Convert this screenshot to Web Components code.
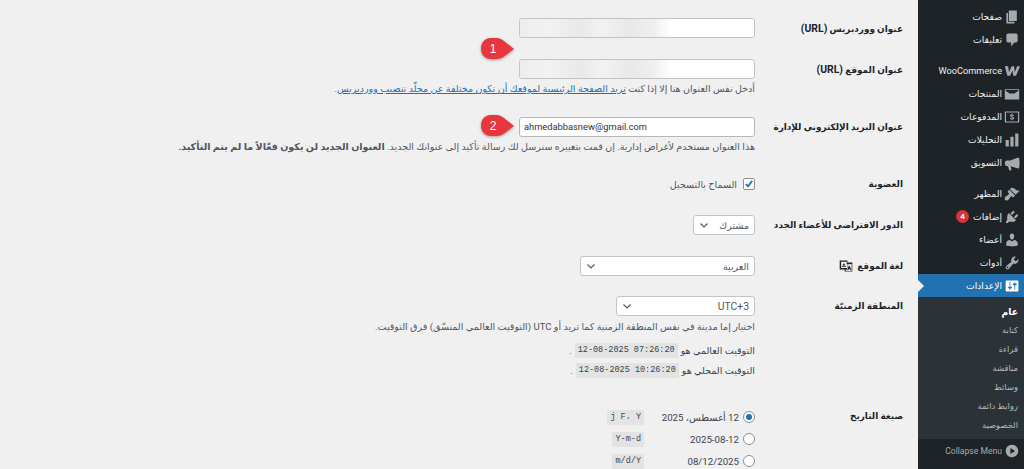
<!DOCTYPE html>
<html lang="ar" dir="rtl">
<head>
<meta charset="utf-8">
<title>إعدادات عامة</title>
<style>
  html, body { margin: 0; height: 100%; overflow: hidden; background: #f0f0f1; }
  body { font-family: Roboto, "DejaVu Sans", sans-serif; }
</style>
</head>
<body>
<wp-admin>
  <wp-menu slot="menu"></wp-menu>

  <wp-row label="عنوان ووردبريس (URL)" style="--after:21px"><wp-field blurred></wp-field></wp-row>
  <wp-row label="عنوان الموقع (URL)" style="--after:21px">
    <wp-field blurred></wp-field>
    <wp-desc>أدخل نفس العنوان هنا إلا إذا كنت <a href="#" style="color:#2271b1">تريد الصفحة الرئيسية لموقعك أن تكون مختلفة عن مجلّد تنصيب ووردبريس</a>.</wp-desc>
  </wp-row>
  <wp-row label="عنوان البريد الإلكتروني للإدارة" style="--after:20px">
    <wp-field value="ahmedabbasnew@gmail.com"></wp-field>
    <wp-desc>هذا العنوان مستخدم لأغراض إدارية. إن قمت بتغييره سنرسل لك رسالة تأكيد إلى عنوانك الجديد. <strong>العنوان الجديد لن يكون فعّالاً ما لم يتم التأكيد.</strong></wp-desc>
  </wp-row>
  <wp-row label="العضوية" style="--after:21px"><wp-check>السماح بالتسجيل</wp-check></wp-row>
  <wp-row label="الدور الافتراضي للأعضاء الجدد" style="--after:21px"><wp-select width="62">مشترك</wp-select></wp-row>
  <wp-row label="لغة الموقع" icon="translation" style="--after:20px"><wp-select width="175">العربية</wp-select></wp-row>
  <wp-row label="المنطقة الزمنيّة" style="--after:28px">
    <wp-select width="139"><span dir="ltr">UTC+3</span></wp-select>
    <wp-desc style="margin-top:4px">اختيار إما مدينة في نفس المنطقة الزمنية كما تريد أو UTC (التوقيت العالمي المنسّق) فرق التوقيت.</wp-desc>
    <wp-time label="التوقيت العالمي هو" value="12-08-2025 07:26:20" style="margin-top:9px"></wp-time>
    <wp-time label="التوقيت المحلي هو" value="12-08-2025 10:26:20"></wp-time>
  </wp-row>
  <wp-row label="صيغة التاريخ">
    <wp-radio checked code="j F، Y">12 أغسطس، 2025</wp-radio>
    <wp-radio code="Y-m-d">2025-08-12</wp-radio>
    <wp-radio code="m/d/Y">08/12/2025</wp-radio>
  </wp-row>

  <wp-callout slot="over" n="1" style="top:37px"></wp-callout>
  <wp-callout slot="over" n="2" style="top:114px"></wp-callout>
</wp-admin>

<script>
const FONT = 'Roboto, "DejaVu Sans", sans-serif';
const ICONS = {
  page: '<path d="M6 15V2h10v13H6zm-1 1h8v2H3V5h2v11z"/>',
  comments: '<path d="M5 2h10c1.1 0 2 .9 2 2v7c0 1.1-.9 2-2 2h-2l-4 5v-5H5c-1.1 0-2-.9-2-2V4c0-1.1.9-2 2-2z"/>',
  woo: '<path d="M1 4h4.200l1 7.500L9.600 4h3l.9 7.500L16.400 4H20l-5 12h-3.400l-1-6.500L7.600 16H4.200z"/>',
  products: '<path fill-rule="evenodd" d="M1 4h18v13H1zM2 6l5 3.500h6L18 6V5H2z"/>',
  payments: '<path fill-rule="evenodd" d="M1 3h18v14H1zm1.500 1.500v11h15v-11z"/><path d="M9.400 6h1.200v1c.8.1 1.500.4 1.900.8l-.7 1c-.5-.4-1.100-.7-1.700-.7-.6 0-.9.2-.9.5s.4.5 1.200.7c1.300.3 2.200.8 2.200 1.900 0 1-.7 1.700-2 1.800v1H9.400v-1c-.9-.1-1.700-.5-2.200-1l.8-1c.5.5 1.200.8 1.900.8.600 0 1-.2 1-.6s-.4-.6-1.300-.8C8.500 10.100 7.700 9.600 7.700 8.500c0-1 .7-1.500 1.700-1.600z"/>',
  analytics: '<path d="M2 10h4v8H2zM8 6h4v12H8zM14 2h4v16h-4z"/>',
  marketing: '<path d="M18 3 8 7H4a3 3 0 0 0-3 3v1a3 3 0 0 0 3 3h1l1.500 5h3L8.200 14.200 18 17c1 0 1.500-3 1.500-7S19 3 18 3z"/>',
  appearance: '<path d="M14.480 11.060 7.410 3.990l1.500-1.500c.5-.56 2.300-.47 3.510.32 1.210.8 1.430 1.280 2.910 2.100 1.180.64 2.450 1.260 4.450.85zm-.71.71L6.700 4.700 4.930 6.470c-.39.39-.39 1.020 0 1.410l1.060 1.060c.39.39.39 1.030 0 1.420-.6.6-1.430 1.110-2.210 1.690-.35.26-.7.53-1.010.84C1.430 13.230.4 15.600 1.310 17.610c1.170 1.210 3.430.3 4.910-1.100.44-.44.77-.9 1.070-1.390.43-.7.84-1.420 1.300-2.060.29-.39.95-.36 1.340.03l.77.77c.39.39 1.020.39 1.410 0z"/>',
  plugins: '<path d="M13.110 4.360 9.870 7.600 8 5.730l3.240-3.240c.35-.34 1.050-.2 1.560.32.52.51.66 1.210.31 1.550zm-8 1.770.91-1.120 9.010 9.010-1.190.84c-.71.71-2.630 1.160-3.820 1.160H6.140L4.900 17.260c-.59.59-1.540.59-2.120 0-.59-.58-.59-1.530 0-2.120l1.240-1.240v-3.880c0-1.130.4-3.190 1.090-3.890zm7.260 3.970 3.240-3.240c.34-.35 1.040-.21 1.550.31.52.51.66 1.210.31 1.550l-3.240 3.250z"/>',
  users: '<path d="M10 9.250c-2.270 0-2.730-3.440-2.730-3.440C7 4.020 7.820 2 9.970 2c2.160 0 2.980 2.020 2.710 3.810 0 0-.41 3.440-2.680 3.440zm0 2.570L12.720 10c2.390 0 4.520 2.330 4.520 4.530v2.490s-3.650 1.130-7.240 1.130c-3.650 0-7.240-1.130-7.240-1.130v-2.490c0-2.250 1.940-4.480 4.470-4.480z"/>',
  tools: '<path fill-rule="evenodd" d="M16.680 9.770c-1.340 1.340-3.300 1.670-4.950.99l-5.410 6.520c-.99.99-2.590.99-3.580 0s-.99-2.590 0-3.570l6.520-5.420c-.68-1.650-.35-3.610.99-4.950 1.280-1.280 3.120-1.620 4.720-1.060l-2.890 2.890 2.820 2.820 2.860-2.870c.53 1.580.18 3.390-1.080 4.650zM3.810 16.210c.4.39 1.040.39 1.430 0 .4-.4.4-1.040 0-1.430-.39-.4-1.030-.4-1.430 0-.39.39-.39 1.030 0 1.430z"/>',
  settings: '<path fill-rule="evenodd" d="M18 16V4c0-.55-.45-1-1-1H3c-.55 0-1 .45-1 1v12c0 .55.45 1 1 1h14c.55 0 1-.45 1-1zM8 11h1c.55 0 1 .45 1 1s-.45 1-1 1H8v1.500c0 .28-.22.5-.5.5s-.5-.22-.5-.5V13H6c-.55 0-1-.45-1-1s.45-1 1-1h1V5.500c0-.28.22-.5.5-.5s.5.22.5.5V11zm5-2h-1c-.55 0-1-.45-1-1s.45-1 1-1h1V5.500c0-.28.22-.5.5-.5s.5.22.5.5V7h1c.55 0 1 .45 1 1s-.45 1-1 1h-1v5.500c0 .28-.22.5-.5.5s-.5-.22-.5-.5V9z"/>',
  collapse: '<path fill-rule="evenodd" d="M10 2.160c4.330 0 7.840 3.510 7.840 7.840s-3.510 7.840-7.840 7.840S2.160 14.330 2.160 10 5.710 2.160 10 2.160zM8 6.120v7.760L13.820 10z"/>',
  translation: '<path fill-rule="evenodd" d="M1 2h11v3h7v13H8v-3H1zm2 2v9h9V7h-1V4zm7 7H4v-1h2.300V9H5V8h1.300V6.500h1.400V8H9v1H7.700v1H10zm1.500-3v7h-1.800V17H18V7zm2.200 2h1.700l2 6h-1.500l-.4-1.300h-1.900l-.4 1.300h-1.500z"/>'
};

function svgIcon(name, size, color) {
  return `<svg width="${size}" height="${size}" viewBox="0 0 20 20" fill="${color}" aria-hidden="true">${ICONS[name]}</svg>`;
}

class WpAdmin extends HTMLElement {
  constructor() {
    super();
    this.attachShadow({ mode: 'open' });
    this.shadowRoot.innerHTML = `
      <style>
        :host { display: flex; height: 469px; position: relative; overflow: hidden; background: #f0f0f1; }
        .side { flex: 0 0 106px; display: flex; }
        .main { flex: 1; padding: 18px 15px 0 0; min-width: 0; }
      </style>
      <div class="side"><slot name="menu"></slot></div>
      <div class="main"><slot></slot></div>
      <slot name="over"></slot>
    `;
  }
}

class WpMenu extends HTMLElement {
  constructor() {
    super();
    this.attachShadow({ mode: 'open' });
    const groups = [
      [['page', 'صفحات'], ['comments', 'تعليقات']],
      [['woo', 'WooCommerce'], ['products', 'المنتجات'], ['payments', 'المدفوعات'], ['analytics', 'التحليلات'], ['marketing', 'التسويق']],
      [['appearance', 'المظهر'], ['plugins', 'إضافات', 4], ['users', 'أعضاء'], ['tools', 'أدوات']]
    ];
    const row = ([icon, text, badge]) => `
      <div class="item">
        <span class="ico">${svgIcon(icon, 16, '#a7aaad')}</span>
        <span>${text}</span>
        ${badge ? `<b class="badge">${badge}</b>` : ''}
      </div>`;
    const subs = ['كتابة', 'قراءة', 'مناقشة', 'وسائط', 'روابط دائمة', 'الخصوصية'];
    this.shadowRoot.innerHTML = `
      <style>
        :host { display: flex; flex-direction: column; flex: 1; background: #1d2327; color: #f0f0f1;
          font-family: ${FONT}; font-size: 9.2px; padding-top: 5px; box-sizing: border-box; }
        .group { margin-bottom: 8px; }
        .group.last { margin-bottom: 0; }
        .item { height: 23px; display: flex; align-items: center; gap: 2px; padding-right: 4px; white-space: nowrap; }
        .ico { display: flex; width: 16px; height: 16px; }
        .badge { width: 13px; height: 13px; border-radius: 50%; background: #d63638; color: #fff; font-size: 8px;
          display: flex; align-items: center; justify-content: center; margin-right: 2px; }
        .active { background: #2271b1; color: #fff; position: relative; }
        .active::after { content: ""; position: absolute; left: 0; top: 50%; margin-top: -6px;
          border: 6px solid transparent; border-left-color: #f0f0f1; border-right-width: 0; }
        .subs { background: #2c3338; padding: 5px 0 4px; }
        .subs div { height: 19px; line-height: 19px; padding-right: 6px; color: #b4b9be; font-size: 8.4px; }
        .subs .cur { color: #fff; font-weight: 700; font-size: 9.2px; }
        .collapse { display: flex; align-items: center; gap: 2px; height: 24px; padding-right: 4px; color: #a7aaad; font-size: 8.6px; }
      </style>
      <div class="group">${groups[0].map(row).join('')}</div>
      <div class="group">${groups[1].map(row).join('')}</div>
      <div class="group last">${groups[2].map(row).join('')}</div>
      <div class="item active"><span class="ico">${svgIcon('settings', 16, '#fff')}</span><span>الإعدادات</span></div>
      <div class="subs"><div class="cur">عام</div>${subs.map(s => `<div>${s}</div>`).join('')}</div>
      <div class="collapse"><span class="ico">${svgIcon('collapse', 16, '#a7aaad')}</span><span dir="ltr">Collapse Menu</span></div>
    `;
  }
}

class WpRow extends HTMLElement {
  constructor() {
    super();
    this.attachShadow({ mode: 'open' });
  }
  connectedCallback() {
    const icon = this.getAttribute('icon');
    const label = this.getAttribute('label').replace('(URL)', '<span class="lat">(URL)</span>');
    this.shadowRoot.innerHTML = `
      <style>
        :host { display: grid; grid-template-columns: 148px 1fr; padding-bottom: var(--after, 0); }
        .th { font: 700 8.9px ${FONT}; color: #1d2327; display: flex; align-items: center; gap: 4px; height: 20px; white-space: nowrap; }
        .lat { font-size: 10.4px; }
        .th svg { display: block; }
        .td { display: flex; flex-direction: column; align-items: flex-start; min-width: 0; }
      </style>
      <div class="th"><span>${label}</span>${icon ? svgIcon(icon, 14, '#1d2327') : ''}</div>
      <div class="td"><slot></slot></div>
    `;
  }
}

class WpField extends HTMLElement {
  constructor() {
    super();
    this.attachShadow({ mode: 'open' });
  }
  connectedCallback() {
    const val = this.getAttribute('value') || '';
    const blur = this.hasAttribute('blurred');
    this.shadowRoot.innerHTML = `
      <style>
        :host { display: block; width: 236px; height: 20px; box-sizing: border-box; background: #fff;
          border: 1px solid ${blur ? '#c3c4c7' : '#b5b7ba'}; border-radius: 3px; overflow: hidden; }
        .v { direction: ltr; text-align: left; font: 9.3px/18px Roboto, sans-serif; color: #2c3338; padding-left: 4px; }
        .blur { height: 100%; width: 152px; margin-right: auto;
          background: linear-gradient(90deg, #ededed 0, #f2f2f2 18%, #e9e9e9 40%, #f2f2f2 55%, #e8e8e8 72%, #efefef 88%, #fff 100%); }
      </style>
      ${blur ? '<div class="blur"></div>' : `<div class="v">${val}</div>`}
    `;
  }
}

class WpDesc extends HTMLElement {
  constructor() {
    super();
    this.attachShadow({ mode: 'open' });
    this.shadowRoot.innerHTML = `
      <style>
        :host { display: block; font: 9.55px/14px ${FONT}; color: #50575e; margin-top: 3px; white-space: nowrap; }
      </style>
      <slot></slot>
    `;
  }
}

class WpCheck extends HTMLElement {
  constructor() {
    super();
    this.attachShadow({ mode: 'open' });
    this.shadowRoot.innerHTML = `
      <style>
        :host { display: flex; align-items: center; gap: 6px; height: 20px; font: 9.55px ${FONT}; color: #50575e; }
        .box { width: 10px; height: 10px; border: 1px solid #8c8f94; border-radius: 2px; background: #fff; display: flex; }
      </style>
      <span class="box"><svg width="10" height="10" viewBox="0 0 10 10"><path d="M1.800 5 4 7.300 8.300 1.800" fill="none" stroke="#2271b1" stroke-width="1.800"/></svg></span>
      <span><slot></slot></span>
    `;
  }
}

class WpSelect extends HTMLElement {
  constructor() {
    super();
    this.attachShadow({ mode: 'open' });
  }
  connectedCallback() {
    this.shadowRoot.innerHTML = `
      <style>
        :host { display: flex; align-items: center; justify-content: space-between; width: ${this.getAttribute('width')}px; height: 20px;
          box-sizing: border-box; background: #fff; border: 1px solid #c3c4c7; border-radius: 3px; padding: 0 5px;
          font: 9.55px ${FONT}; color: #50575e; }
        svg { display: block; }
        ::slotted(span) { font-size: 10.4px; }
      </style>
      <span><slot></slot></span>
      <svg width="10" height="10" viewBox="0 0 10 10"><path d="M1.500 3.500 5 7l3.500-3.500" fill="none" stroke="#50575e" stroke-width="1.100"/></svg>
    `;
  }
}

class WpTime extends HTMLElement {
  constructor() {
    super();
    this.attachShadow({ mode: 'open' });
  }
  connectedCallback() {
    this.shadowRoot.innerHTML = `
      <style>
        :host { display: flex; align-items: center; gap: 3px; height: 15px; margin-top: 5px; font: 9.55px ${FONT}; color: #3c434a; white-space: nowrap; }
        code { font: 8.5px/15px "Liberation Mono", monospace; background: rgba(0,0,0,.05); padding: 0 3px; direction: ltr; }
      </style>
      <span>${this.getAttribute('label')}</span><code>${this.getAttribute('value')}</code><span>.</span>
    `;
  }
}

class WpRadio extends HTMLElement {
  constructor() {
    super();
    this.attachShadow({ mode: 'open' });
  }
  connectedCallback() {
    const on = this.hasAttribute('checked');
    this.shadowRoot.innerHTML = `
      <style>
        :host { display: flex; align-items: center; height: 22px; font: 9.7px ${FONT}; color: #3c434a; }
        .dot { width: 10px; height: 10px; border: 1px solid #8c8f94; border-radius: 50%; background: #fff; display: flex; align-items: center; justify-content: center; }
        .dot i { width: 6px; height: 6px; border-radius: 50%; background: #2271b1; }
        .t { width: 95px; margin-right: 4px; }
        code { font: 8.5px/15px "Liberation Mono", monospace; background: rgba(0,0,0,.05); padding: 0 3px; direction: ltr; }
      </style>
      <span class="dot">${on ? '<i></i>' : ''}</span>
      <span class="t"><slot></slot></span>
      <code>${this.getAttribute('code')}</code>
    `;
  }
}

class WpCallout extends HTMLElement {
  constructor() {
    super();
    this.attachShadow({ mode: 'open' });
  }
  connectedCallback() {
    this.shadowRoot.innerHTML = `
      <style>
        :host { position: absolute; left: 479px; width: 38px; height: 24px; display: block; }
        svg { position: absolute; inset: 0; overflow: visible; filter: drop-shadow(0 1px 1.5px rgba(0,0,0,.35)); }
        span { position: absolute; left: 2px; top: 0; width: 24px; text-align: center; color: #fff;
          font: 400 12px/24px "Liberation Sans", sans-serif; }
      </style>
      <svg width="38" height="24" viewBox="0 0 38 24"><path d="M12 1h6c5 0 9 5 17 11-8 6-12 10-17 10h-6C6 22 2 17.500 2 11.500S6 1 12 1z" fill="#e8373c"/></svg>
      <span>${this.getAttribute('n')}</span>
    `;
  }
}

customElements.define('wp-admin', WpAdmin);
customElements.define('wp-menu', WpMenu);
customElements.define('wp-row', WpRow);
customElements.define('wp-field', WpField);
customElements.define('wp-desc', WpDesc);
customElements.define('wp-check', WpCheck);
customElements.define('wp-select', WpSelect);
customElements.define('wp-time', WpTime);
customElements.define('wp-radio', WpRadio);
customElements.define('wp-callout', WpCallout);
</script>
</body>
</html>
